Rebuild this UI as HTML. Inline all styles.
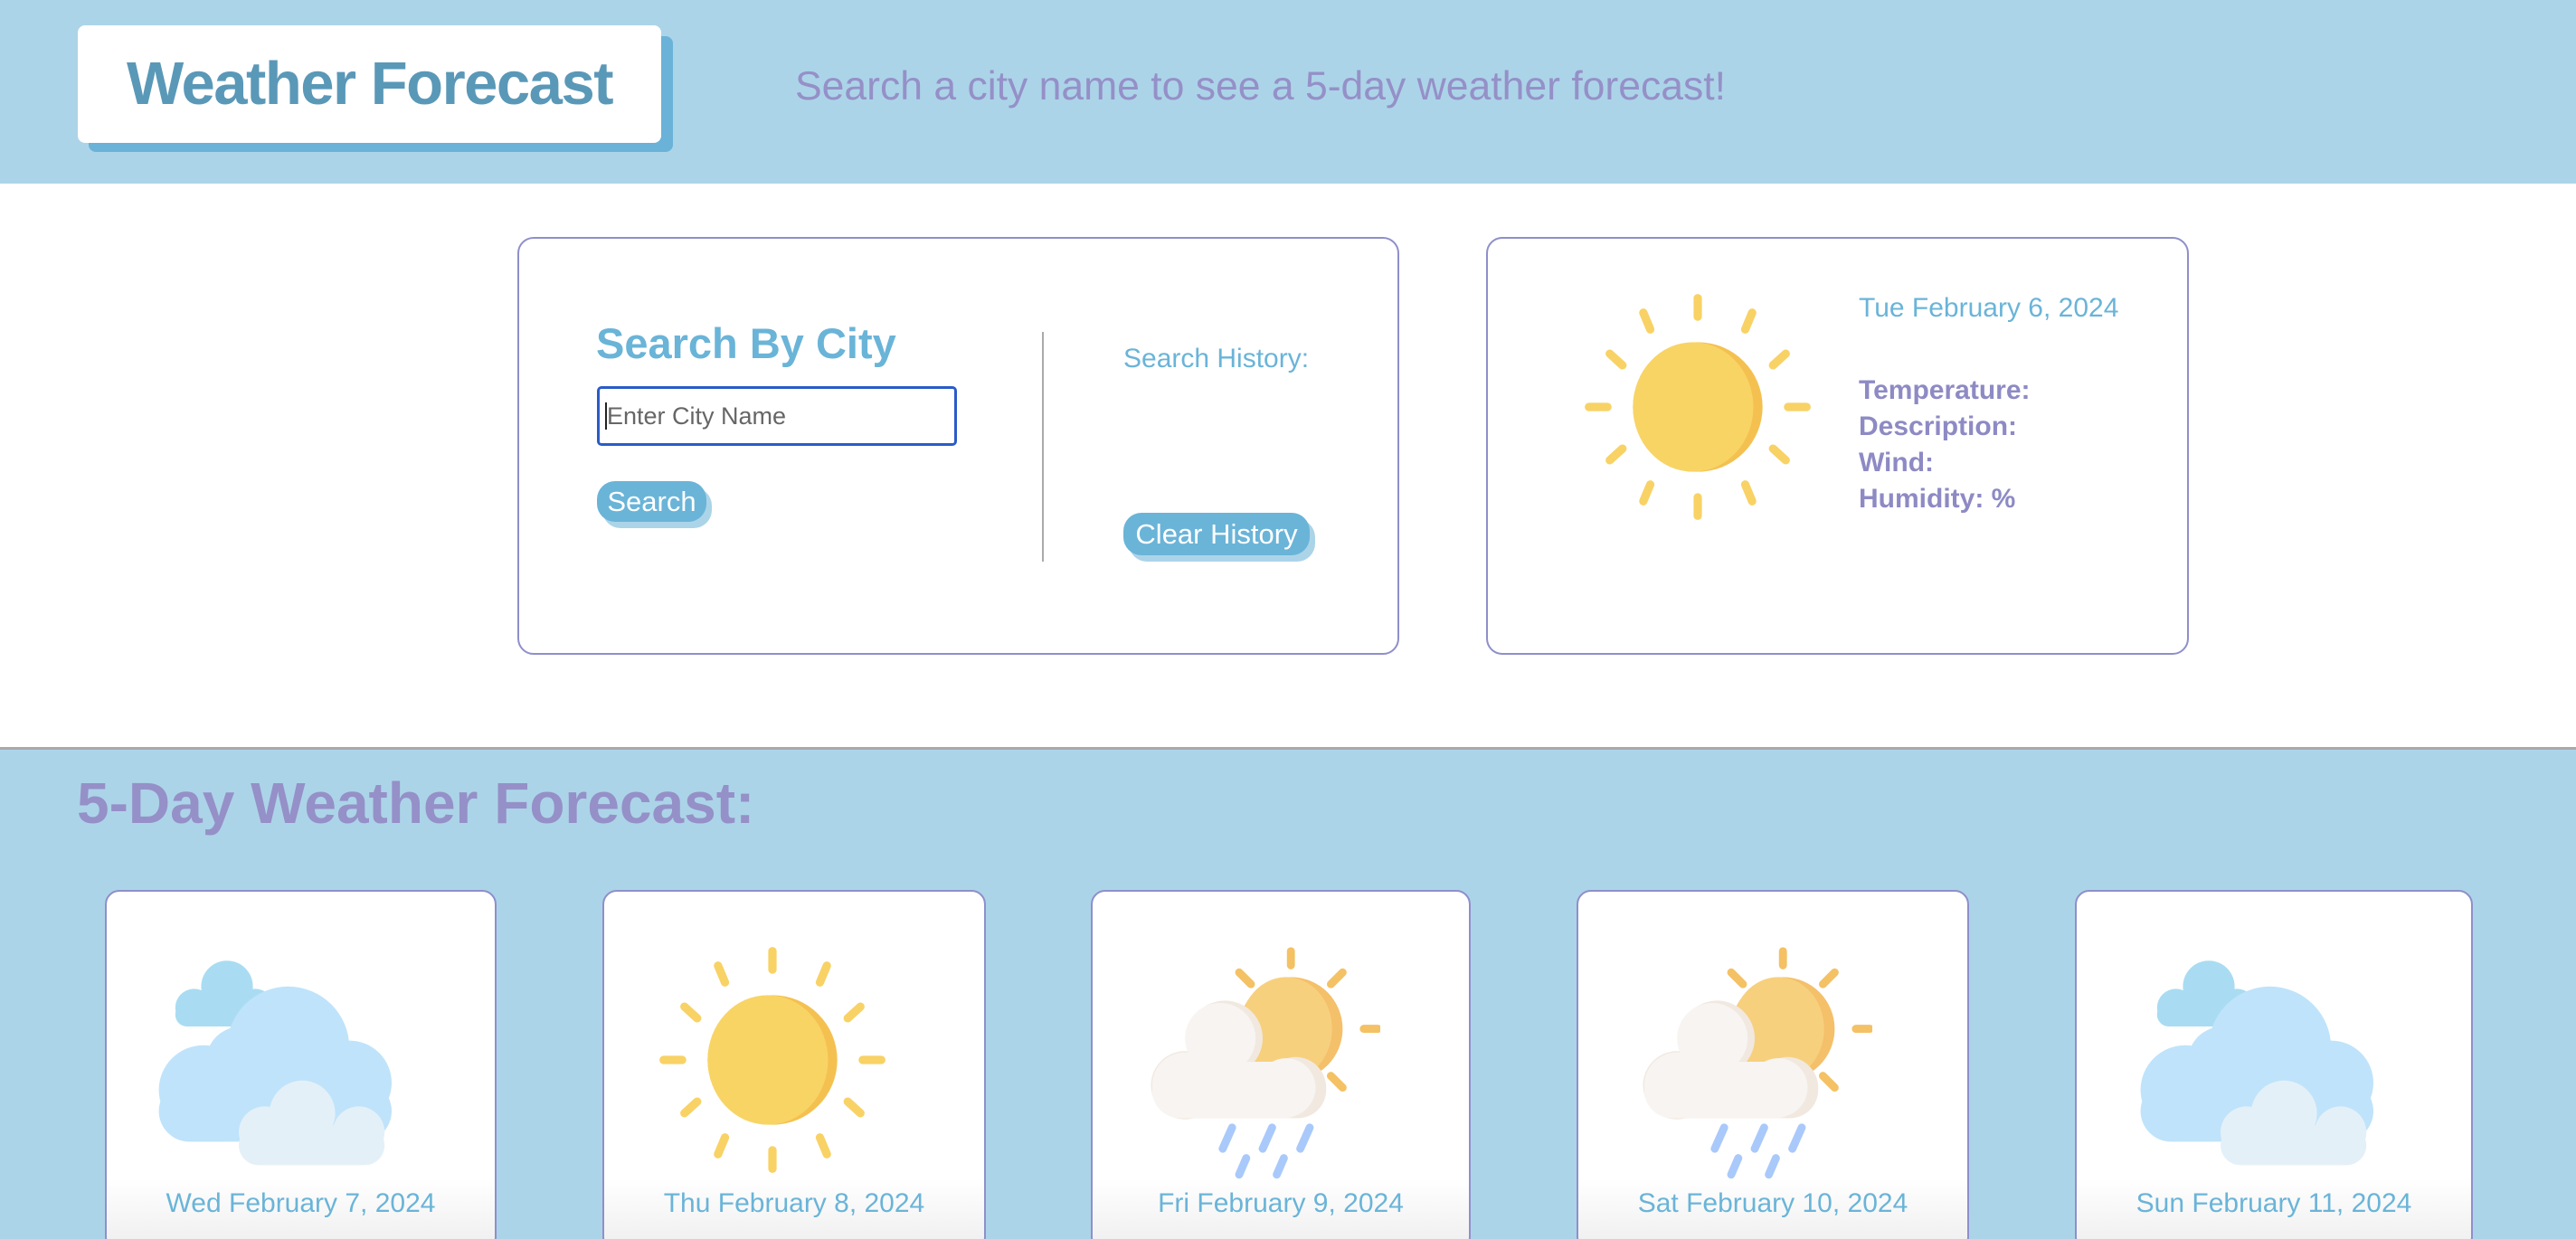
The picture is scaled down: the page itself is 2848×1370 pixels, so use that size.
<!DOCTYPE html>
<html><head><meta charset="utf-8">
<style>
*{margin:0;padding:0;box-sizing:border-box}
html,body{width:2848px;height:1370px;overflow:hidden}
body{background:#fff;font-family:"Liberation Sans",Arial,sans-serif;position:relative}
.hdr{position:absolute;left:0;top:0;width:2848px;height:203px;background:#acd4e8}
.tshadow{position:absolute;left:98px;top:40px;width:646px;height:128px;background:#6ab2d8;border-radius:8px}
.tbox{position:absolute;left:86px;top:28px;width:645px;height:130px;background:#fff;border-radius:8px;color:#5a98b8;font-weight:bold;font-size:67px;text-align:center;line-height:130px;letter-spacing:-1.5px}
.sub{position:absolute;left:879px;top:71px;font-size:44.5px;color:#9590c8}
.card{position:absolute;border:2px solid #8f8fcb;border-radius:18px;background:#fff}
.abs{position:absolute;white-space:nowrap}
.btn{position:absolute;background:#6ab4d8;color:#fff;border-radius:20px;box-shadow:6px 7px 0 #acd4e8;font-size:31px;text-align:center}
.fc{position:absolute;top:984px;height:400px;background:linear-gradient(#fff 0,#fff 80%,#eee 100%);border:2px solid #8f8fcb;border-radius:16px}
.fc svg{position:absolute;left:50%;top:58px;margin-left:-130px}
.fc .d{position:absolute;left:0;right:0;top:328px;text-align:center;font-size:30px;color:#6ab4d8}
</style></head><body>
<svg width="0" height="0" style="position:absolute">
<defs>
<symbol id="sun" viewBox="0 0 100 100">
<g stroke="#f8d265" stroke-width="3.6" stroke-linecap="round">
<line x1="50" y1="3" x2="50" y2="11"/><line x1="50" y1="89" x2="50" y2="97"/>
<line x1="3" y1="50" x2="11" y2="50"/><line x1="89" y1="50" x2="97" y2="50"/>
<line x1="26.5" y1="9.3" x2="29.5" y2="16.5"/><line x1="73.5" y1="9.3" x2="70.5" y2="16.5"/>
<line x1="26.5" y1="90.7" x2="29.5" y2="83.5"/><line x1="73.5" y1="90.7" x2="70.5" y2="83.5"/>
<line x1="12" y1="27" x2="17.5" y2="32"/><line x1="88" y1="27" x2="82.5" y2="32"/>
<line x1="12" y1="73" x2="17.5" y2="68"/><line x1="88" y1="73" x2="82.5" y2="68"/>
</g>
<circle cx="50" cy="50" r="28" fill="#f4c150"/>
<ellipse cx="48" cy="50" rx="26" ry="28" fill="#f8d465"/>
</symbol>
<symbol id="clouds" viewBox="0 0 100 100">
<g fill="#a9dcf2"><circle cx="30" cy="18" r="11"/><circle cx="16" cy="27" r="8"/><circle cx="42" cy="27" r="8"/><rect x="8" y="25" width="40" height="10" rx="5"/></g>
<g fill="#bfe3fa"><circle cx="56" cy="44" r="26"/><circle cx="20" cy="62" r="19"/><circle cx="36" cy="50" r="15"/><circle cx="82" cy="59" r="18"/><rect x="1" y="58" width="99" height="26" rx="13"/></g>
<g fill="#e4f0f8"><circle cx="62" cy="72" r="14"/><circle cx="46" cy="80" r="11"/><circle cx="86" cy="80" r="11"/><rect x="35" y="77" width="62" height="17" rx="8.5"/></g>
</symbol>
<symbol id="rain" viewBox="0 0 100 100">
<g stroke="#f4c164" stroke-width="3.4" stroke-linecap="round">
<line x1="62" y1="3" x2="62" y2="9"/><line x1="93" y1="36" x2="99" y2="36"/>
<line x1="40" y1="12" x2="45" y2="17"/><line x1="84" y1="12" x2="79" y2="17"/><line x1="79" y1="56" x2="84" y2="61"/>
</g>
<circle cx="62" cy="36" r="22" fill="#f4c06a"/>
<ellipse cx="60" cy="36" rx="19.5" ry="22" fill="#f7d07e"/>
<g fill="#f1e8df"><circle cx="34" cy="40" r="16"/><circle cx="64" cy="61" r="13"/><circle cx="17" cy="60" r="14.5"/><rect x="3" y="50" width="74" height="24" rx="12"/></g>
<g fill="#f7f4f2"><circle cx="32" cy="40" r="15"/><circle cx="60" cy="61" r="12.5"/><circle cx="17" cy="60" r="14"/><rect x="3" y="50" width="68" height="24" rx="12"/></g>
<g stroke="#a9c9fb" stroke-width="3.4" stroke-linecap="round">
<line x1="37" y1="78" x2="33" y2="87"/><line x1="54" y1="78" x2="50" y2="87"/><line x1="70" y1="78" x2="66" y2="87"/>
<line x1="43" y1="91" x2="40" y2="98"/><line x1="59" y1="91" x2="56" y2="98"/>
</g>
</symbol>
</defs></svg>

<div class="hdr">
<div class="tshadow"></div>
<div class="tbox">Weather Forecast</div>
<div class="sub">Search a city name to see a 5-day weather forecast!</div>
</div>

<div class="card" style="left:572px;top:262px;width:975px;height:462px">
<div class="abs" style="left:85px;top:88px;font-size:47px;font-weight:bold;color:#6ab4d8">Search By City</div>
<div class="abs" style="left:86px;top:163px;width:398px;height:66px;border:3px solid #2a5bc8;border-radius:5px;font-size:27px;color:#666;line-height:60px;padding-left:6px"><span style="border-left:2px solid #222"></span>Enter City Name</div>
<div class="btn" style="left:86px;top:268px;width:121px;height:45px;line-height:45px">Search</div>
<div class="abs" style="left:578px;top:103px;width:2px;height:254px;background:#aaa"></div>
<div class="abs" style="left:668px;top:116px;font-size:30px;color:#6ab4d8">Search History:</div>
<div class="btn" style="left:668px;top:303px;width:206px;height:47px;line-height:47px">Clear History</div>
</div>

<div class="card" style="left:1643px;top:262px;width:777px;height:462px">
<svg style="position:absolute;left:104px;top:58px" width="256" height="256"><use href="#sun"/></svg>
<div class="abs" style="left:410px;top:60px;font-size:30px;color:#6ab4d8">Tue February 6, 2024</div>
<div class="abs" style="left:410px;top:148px;font-size:30px;font-weight:bold;color:#8d8ac4;line-height:40px">Temperature:<br>Description:<br>Wind:<br>Humidity: %</div>
</div>

<div style="position:absolute;left:0;top:826px;width:2848px;height:3px;background:#a9a9a9"></div>
<div style="position:absolute;left:0;top:829px;width:2848px;height:541px;background:#acd4e8"></div>
<div class="abs" style="left:85px;top:851px;font-size:64px;font-weight:bold;color:#9590c8">5-Day Weather Forecast:</div>

<div class="fc" style="left:116px;width:433px"><svg width="260" height="260" style="margin-left:-160px"><use href="#clouds"/></svg><div class="d">Wed February 7, 2024</div></div>
<div class="fc" style="left:666px;width:424px"><svg width="256" height="256" style="margin-left:-152px"><use href="#sun"/></svg><div class="d">Thu February 8, 2024</div></div>
<div class="fc" style="left:1206px;width:420px"><svg width="260" height="260" style="margin-left:-150px"><use href="#rain"/></svg><div class="d">Fri February 9, 2024</div></div>
<div class="fc" style="left:1743px;width:434px"><svg width="260" height="260" style="margin-left:-150px"><use href="#rain"/></svg><div class="d">Sat February 10, 2024</div></div>
<div class="fc" style="left:2294px;width:440px"><svg width="260" height="260" style="margin-left:-150px"><use href="#clouds"/></svg><div class="d">Sun February 11, 2024</div></div>
</body></html>
